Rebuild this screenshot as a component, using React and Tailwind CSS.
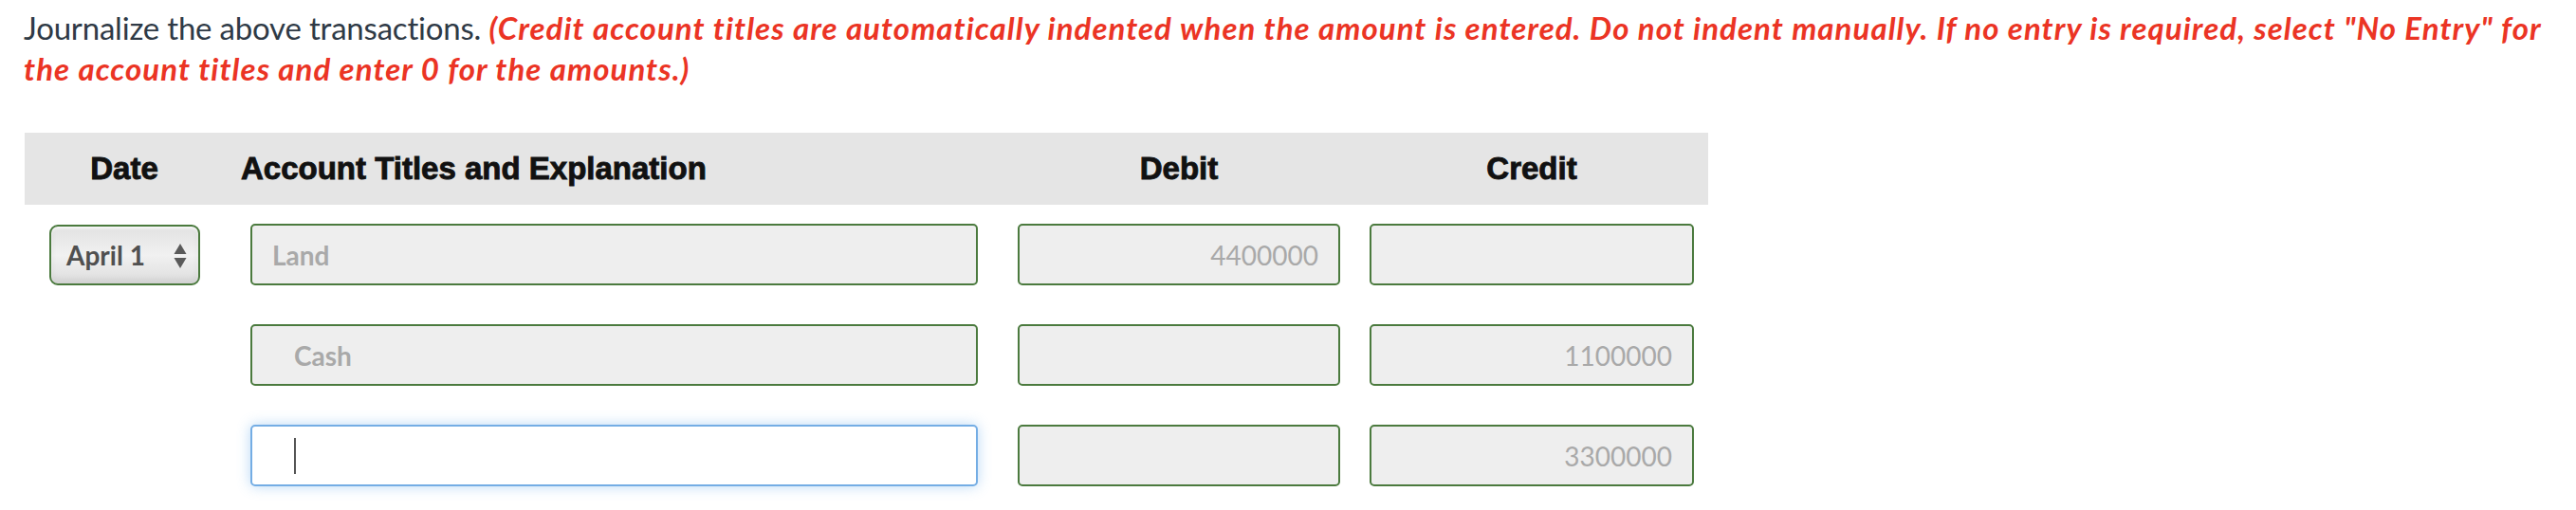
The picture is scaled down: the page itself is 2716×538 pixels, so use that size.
import React from "react";

const lato = { fontFamily: "Lato, 'Noto Sans', sans-serif" };

function Box({ children, align = "left", indent = false, focused = false, className = "" }) {
  const base = focused
    ? "bg-white border-2 border-[#74ade4] shadow-[0_0_14px_rgba(102,170,235,0.45)]"
    : "bg-[#eeeeee] border-2 border-[#4b7a3e]";
  return (
    <div
      className={`h-[65px] rounded-[5px] flex items-center text-[28px] text-[#a9a9a9] ${base} ${
        align === "right" ? "justify-end pr-[21px]" : indent ? "pl-[44px]" : "pl-[21px]"
      } ${className}`}
      style={lato}
    >
      {children}
    </div>
  );
}

function DateSelect() {
  return (
    <div
      className="w-[159px] h-[64px] rounded-[9px] border-2 border-[#4b7a3e] flex items-center justify-between pl-[16px] pr-[12px] bg-gradient-to-b from-[#e2e2e2] via-[#f1f1f1] to-[#dedede] shadow-[inset_0_-5px_6px_rgba(0,0,0,0.06),inset_0_2px_3px_rgba(255,255,255,0.8)]"
      style={lato}
    >
      <span className="text-[28px] font-bold text-[#505050]">April 1</span>
      <svg width="14" height="26" viewBox="0 0 14 26" className="mt-[2px]">
        <path d="M7 0 L13.5 11 L0.5 11 Z" fill="#5a5a5a" />
        <path d="M0.5 15 L13.5 15 L7 26 Z" fill="#5a5a5a" />
      </svg>
    </div>
  );
}

const cols = "grid grid-cols-[210px_816px_377px_372px] items-center";

export default function App() {
  return (
    <div className="w-[2716px] h-[538px] bg-white overflow-hidden">
      <p
        className="pl-[25px] pt-[8px] text-[33px] leading-[43px] text-[#2f3a46] w-[2705px]"
        style={lato}
      >
        <span className="tracking-[-0.2px]">Journalize the above transactions.</span>{" "}
        <span className="text-[#eb3424] font-bold italic tracking-[1.05px]">
          (Credit account titles are automatically indented when the amount is entered. Do not indent manually. If no entry
          is required, select "No Entry" for the account titles and enter 0 for the amounts.)
        </span>
      </p>

      <div className="ml-[26px] mt-[46px] w-[1775px]">
        <div
          className={`h-[76px] bg-[#e5e5e5] ${cols} text-[33px] font-bold text-[#111111] [-webkit-text-stroke:0.9px_#111111]`}
          style={{ fontFamily: "Tahoma, 'Liberation Sans', Arial, sans-serif" }}
        >
          <div className="text-center">Date</div>
          <div className="pl-[18px]">Account Titles and Explanation</div>
          <div className="text-center pl-[5px]">Debit</div>
          <div className="text-center">Credit</div>
        </div>

        <div className="mt-[20px] flex flex-col gap-[41px]">
          <div className={cols}>
            <div className="pl-[26px]">
              <DateSelect />
            </div>
            <div className="pl-[28px]">
              <Box className="w-[767px]">
                <span className="font-bold">Land</span>
              </Box>
            </div>
            <div className="pl-[21px]">
              <Box className="w-[340px]" align="right">
                4400000
              </Box>
            </div>
            <div className="pl-[15px]">
              <Box className="w-[342px]" align="right" />
            </div>
          </div>

          <div className={cols}>
            <div />
            <div className="pl-[28px]">
              <Box className="w-[767px]" indent>
                <span className="font-bold">Cash</span>
              </Box>
            </div>
            <div className="pl-[21px]">
              <Box className="w-[340px]" align="right" />
            </div>
            <div className="pl-[15px]">
              <Box className="w-[342px]" align="right">
                1100000
              </Box>
            </div>
          </div>

          <div className={cols}>
            <div />
            <div className="pl-[28px]">
              <Box className="w-[767px]" indent focused>
                <span className="block w-[2px] h-[38px] bg-[#555555]" />
              </Box>
            </div>
            <div className="pl-[21px]">
              <Box className="w-[340px]" align="right" />
            </div>
            <div className="pl-[15px]">
              <Box className="w-[342px]" align="right">
                3300000
              </Box>
            </div>
          </div>
        </div>
      </div>
    </div>
  );
}
